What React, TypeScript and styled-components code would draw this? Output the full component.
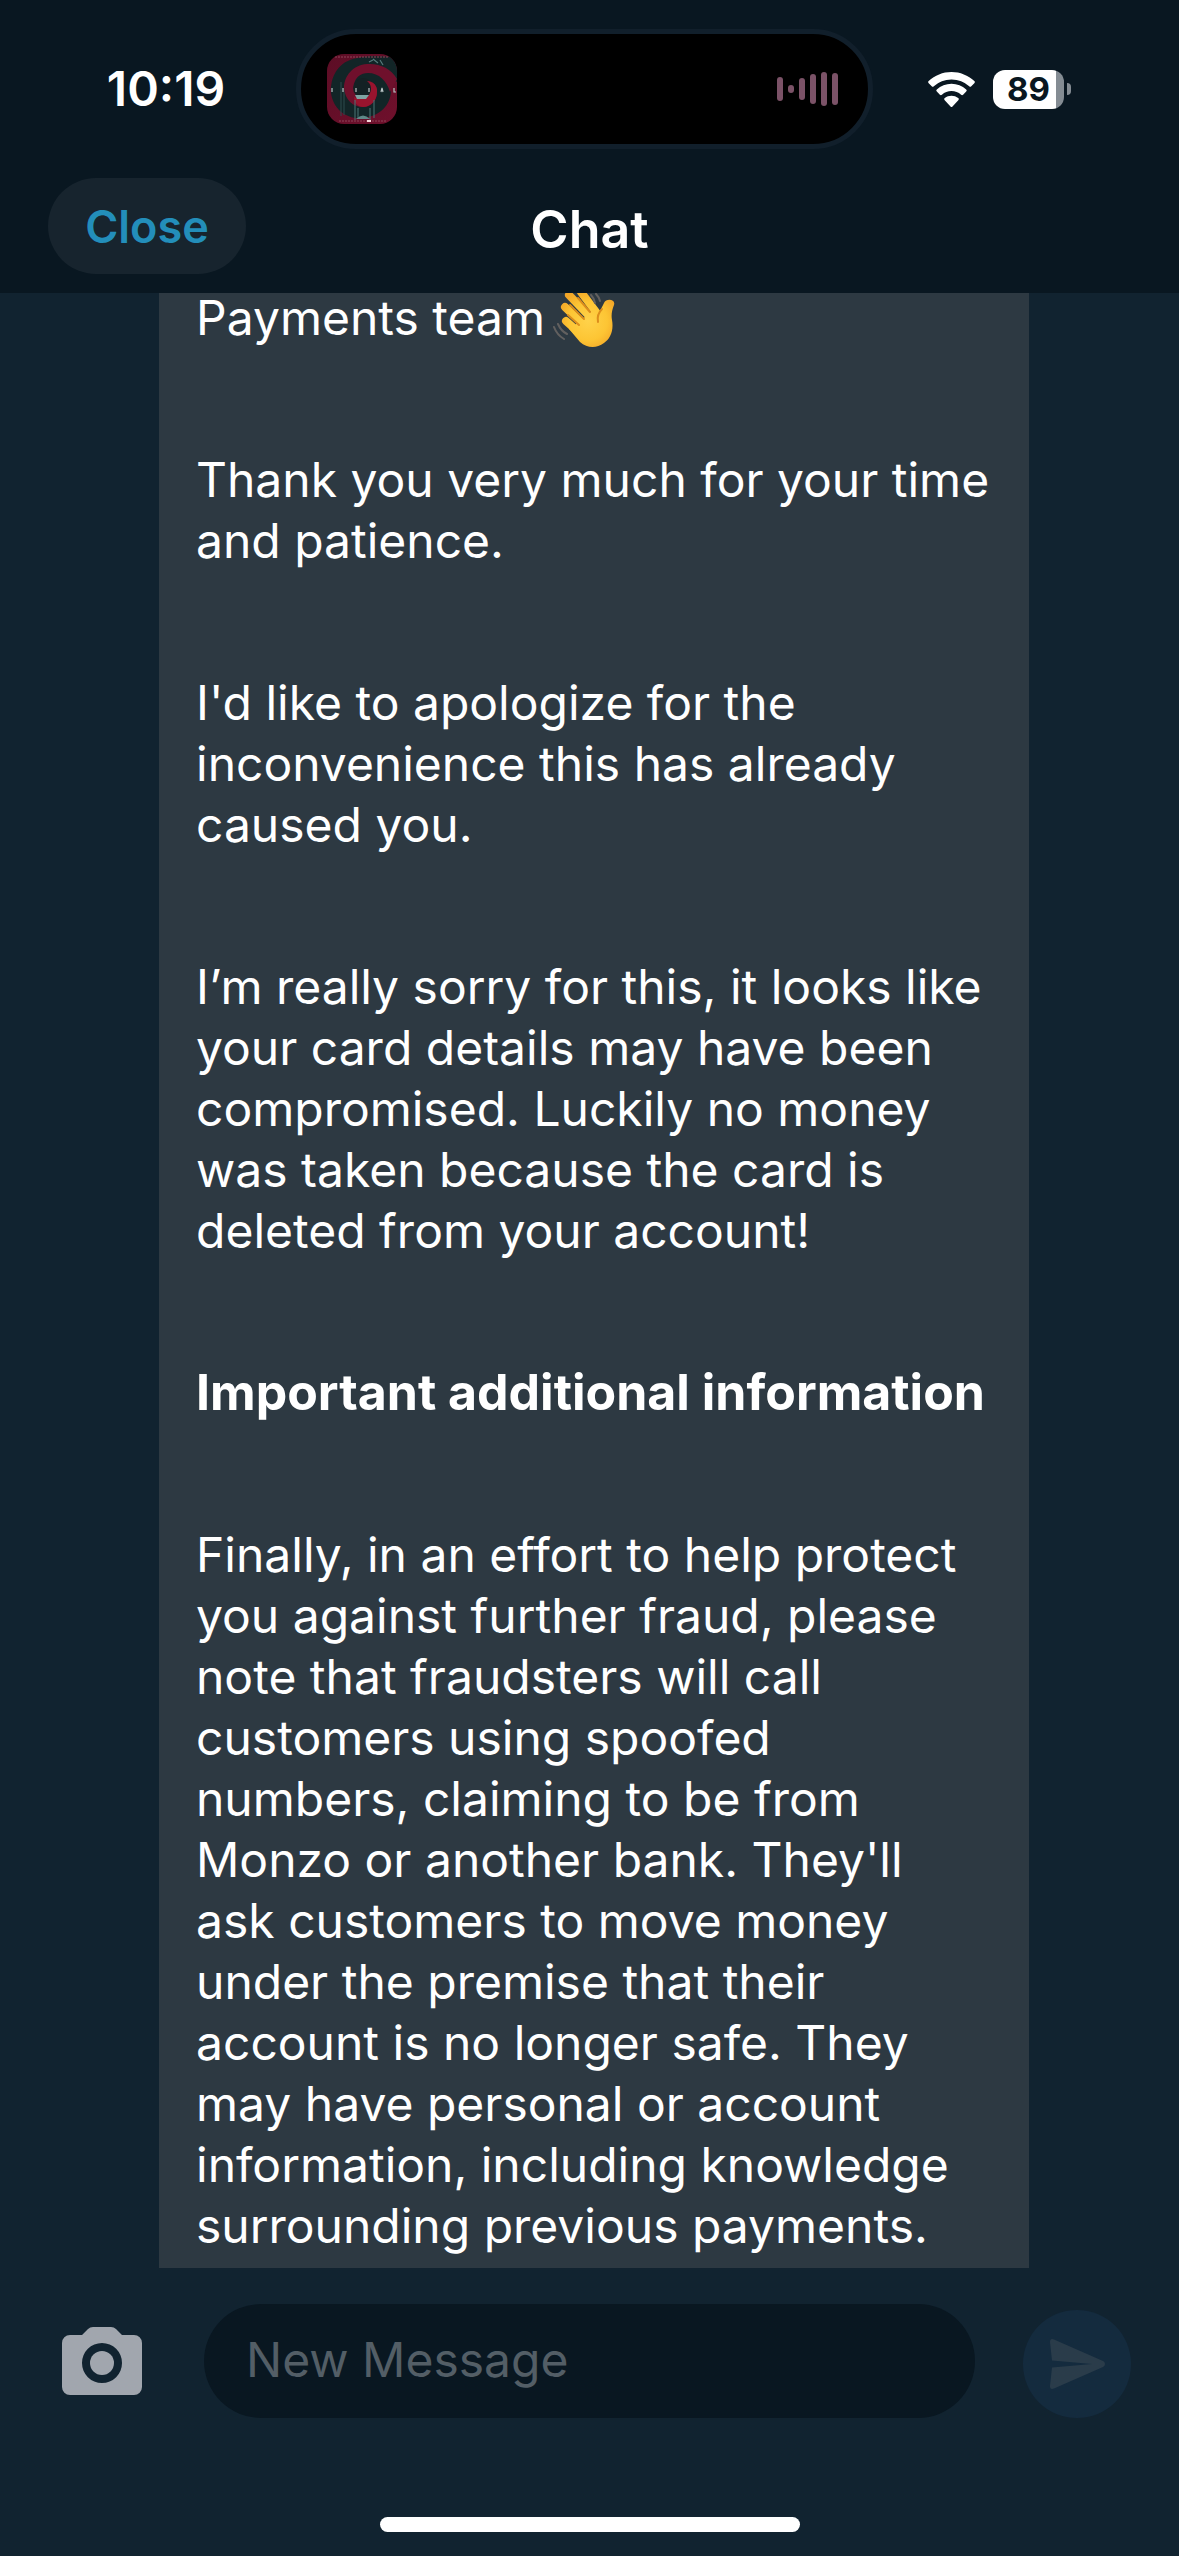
import React from "react";
import styled, { createGlobalStyle } from "styled-components";

const color = {
  header: "#091721",
  page: "#112330",
  bubble: "#2d3942",
  pill: "#17242e",
  islandRim: "#111f2b",
  accent: "#238eba",
  wave: "#7b5267",
  muted: "#535e66",
  icon: "#a1a6ae",
  send: "#142b3e",
  sendIcon: "#2a3c4a",
};

const GlobalStyle = createGlobalStyle`
  *, *::before, *::after { box-sizing: border-box; }
  body {
    margin: 0;
    background: ${color.page};
    color: #fff;
    font-family: Inter, "Liberation Sans", sans-serif;
  }
  button, input { font: inherit; border: 0; padding: 0; margin: 0; }
`;

const Screen = styled.div`
  display: flex;
  flex-direction: column;
  height: 100vh;
  overflow: hidden;
`;

const Header = styled.header`
  flex: none;
  background: ${color.header};
  padding-bottom: 11px;
`;

const StatusBar = styled.div`
  display: flex;
  align-items: center;
  padding-top: 29px;
`;

const Clock = styled.time`
  width: 296px;
  padding-left: 36px;
  text-align: center;
  font-size: 48px;
  font-weight: 600;
  line-height: 60px;
`;

const Island = styled.div`
  flex: 1;
  height: 120px;
  display: flex;
  align-items: center;
  justify-content: space-between;
  padding: 0 30px 0 26px;
  border: 5px solid ${color.islandRim};
  border-radius: 60px;
  background: #000;
`;

const Indicators = styled.div`
  width: 306px;
  display: flex;
  align-items: center;
  gap: 18px;
  padding-left: 55px;
`;

const BatteryWrap = styled.div`
  display: flex;
  align-items: center;
  gap: 3px;
`;

const BatteryBody = styled.div`
  width: 71px;
  height: 39px;
  border-radius: 12px;
  background: linear-gradient(to right, #fff 63px, #848c93 63px);
  color: ${color.header};
  text-align: center;
  font-size: 33px;
  font-weight: 700;
  line-height: 39px;
`;

const BatteryCap = styled.div`
  width: 4px;
  height: 12px;
  border-radius: 0 4px 4px 0;
  background: #848c93;
`;

const NavBar = styled.div`
  display: grid;
  grid-template-columns: 1fr auto 1fr;
  align-items: start;
  padding: 29px 48px 0;
`;

const CloseButton = styled.button`
  justify-self: start;
  width: 198px;
  height: 96px;
  border-radius: 48px;
  background: ${color.pill};
  color: ${color.accent};
  font-size: 45px;
  font-weight: 600;
`;

const Title = styled.h1`
  margin: 0;
  font-size: 52px;
  font-weight: 600;
  line-height: 104px;
`;

const Thread = styled.main`
  flex: 1;
  min-height: 0;
  display: flex;
  flex-direction: column;
  justify-content: flex-end;
  overflow: hidden;
  padding: 0 150px 0 159px;
`;

const Bubble = styled.article`
  display: flex;
  flex-direction: column;
  gap: 101px;
  padding: 0 37px 12px;
  background: ${color.bubble};
`;

const Paragraph = styled.p<{ $bold?: boolean }>`
  margin: 0;
  font-size: ${(p) => (p.$bold ? 50 : 48)}px;
  font-weight: ${(p) => (p.$bold ? 700 : 400)};
  line-height: 61px;
`;

const Wave = styled.svg`
  width: 66px;
  height: 61px;
  margin-left: 7px;
  vertical-align: top;
`;

const Composer = styled.form`
  flex: none;
  display: flex;
  align-items: center;
  padding: 36px 48px 0 62px;
`;

const CameraButton = styled.button`
  display: flex;
  width: 80px;
  height: 68px;
  background: none;
`;

const MessageInput = styled.input`
  flex: 1;
  min-width: 0;
  height: 114px;
  margin: 0 48px 0 62px;
  padding: 0 42px 4px;
  border-radius: 57px;
  outline: none;
  background: ${color.header};
  color: #fff;
  font-size: 48px;
  &::placeholder { color: ${color.muted}; opacity: 1; }
`;

const SendButton = styled.button`
  display: grid;
  place-items: center;
  align-self: flex-end;
  width: 108px;
  height: 108px;
  border-radius: 50%;
  background: ${color.send};
`;

const HomeArea = styled.div`
  flex: none;
  display: flex;
  justify-content: center;
  padding: 99px 0 24px;
`;

const HomeIndicator = styled.div`
  width: 420px;
  height: 15px;
  border-radius: 8px;
  background: #fff;
`;

const AlbumArt = () => (
  <svg width="70" height="70" viewBox="0 0 70 70" aria-hidden="true">
    <defs>
      <clipPath id="artClip">
        <rect width="70" height="70" rx="17" />
      </clipPath>
      <linearGradient id="artRed" x1="0" y1="0" x2="1" y2="1">
        <stop offset="0" stopColor="#5c0d25" />
        <stop offset="1" stopColor="#6f102c" />
      </linearGradient>
    </defs>
    <g clipPath="url(#artClip)">
      <rect width="70" height="70" fill="url(#artRed)" />
      <path
        d="M30 4C12 7 3 22 4 39c2 16 16 27 32 25 17-2 28-13 28-28 0-6-1-9-2-12l8 4V4C58 2 44 1 30 4Z"
        fill="#122527"
      />
      <path
        d="M14 28v34M17 34v27"
        stroke="#2c4d4e"
        strokeWidth="1"
      />
      <path
        d="M70 25C64 14 52 9 40 10 26 11 17 22 17 34c1 12 9 19 19 19 9 0 14-7 14-15 0-6-4-11-9-11 3 3 5 6 4 10-1 5-5 7-9 6-6-1-10-5-9-12 1-8 7-12 14-12 11 0 19 8 22 19Z"
        fill="#6f102c"
      />
      <circle cx="36" cy="34" r="10" fill="#142124" />
      <path d="M27 43c6 3 14 2 16-4 2-4 1-9-3-12 6 0 11 5 10 11 0 8-6 15-14 15-5 0-9-4-9-10Z" fill="#98142e" />
      <path d="M28 41h14l-3 4h-9Z" fill="#7fa3a2" />
      <path d="M28 46v20M31 54v11M43 54v12M47 46v18" stroke="#4b7776" strokeWidth="1" />
      <path d="M29 65q7-7 14 0Z" fill="#5f8988" />
      <path d="M46 5l5 4M53 6l3 5M42 8l4-2" stroke="#55797a" strokeWidth="1.2" />
      <path d="M8 3h54M12 67h48" stroke="#8d4559" strokeWidth="1" strokeDasharray="2 1" />
      <path d="M40 67h4" stroke="#f3d5d8" strokeWidth="2" />
      <path
        d="M5 34v4M16 34v4M29 34v4M42 34v4M54 38l1-4 1 4M67 34v4h2"
        stroke="#b9c4c5"
        strokeWidth="1.2"
        fill="none"
      />
    </g>
  </svg>
);

const levels = [24, 8, 22, 30, 34, 32];

const AudioLevels = () => (
  <svg width="61" height="34" viewBox="0 0 61 34" aria-hidden="true">
    {levels.map((h, i) => (
      <rect key={i} x={i * 11} y={(34 - h) / 2} width="6" height={h} rx="3" fill={color.wave} />
    ))}
  </svg>
);

const WifiIcon = () => (
  <svg width="47" height="35" viewBox="0 0 47 35" fill="#fff" role="img" aria-label="Wi-Fi">
    <path d="M23.500 0C14.800 0 6.800 3.400.700 9a1.500 1.500 0 0 0 0 2.200l3 3.100a1.500 1.500 0 0 0 2.100 0A26 26 0 0 1 23.500 7.500 26 26 0 0 1 41.200 14.300a1.500 1.500 0 0 0 2.100 0l3-3.100a1.500 1.500 0 0 0 0-2.200C40.200 3.400 32.200 0 23.500 0Z" />
    <path d="M23.500 11.800c-5.600 0-10.700 2.100-14.700 5.600a1.500 1.500 0 0 0 0 2.200l3.100 3.100a1.500 1.500 0 0 0 2 0 14.500 14.500 0 0 1 19.200 0 1.500 1.500 0 0 0 2 0l3.100-3.100a1.500 1.500 0 0 0 0-2.200c-4-3.500-9.100-5.600-14.700-5.600Z" />
    <path d="M23.500 23.800c-2.500 0-4.800.8-6.700 2.200a1.500 1.500 0 0 0-.1 2.200l5.800 6.200a1.400 1.400 0 0 0 2 0l5.800-6.200a1.500 1.500 0 0 0-.1-2.200 11.200 11.200 0 0 0-6.700-2.200Z" />
  </svg>
);

const WavingHand = () => (
  <Wave viewBox="0 0 66 61" role="img" aria-label="waving hand">
    <defs>
      <radialGradient id="skin" gradientUnits="userSpaceOnUse" cx="36" cy="34" r="32">
        <stop offset="0" stopColor="#ffd24a" />
        <stop offset="0.6" stopColor="#fdc534" />
        <stop offset="1" stopColor="#f3a627" />
      </radialGradient>
    </defs>
    <g stroke="url(#skin)" strokeWidth="8" strokeLinecap="round" fill="none">
      <path d="M14 34 32 50" />
      <path d="M13 20 36 42" />
      <path d="M17 8 40 32" />
      <path d="M29 5 44 25" />
    </g>
    <path
      d="M23 38 44 21c1 2 4 4 5 1l3-6c2-5 12-4 10 2-2 5-3 10-2 15 2 11-2 19-8 23-8 6-17 5-24-1L17 42Z"
      fill="url(#skin)"
    />
    <path
      d="M16 28 27 38M18 18 32 32M26 11 38 25M50 22c-4 4-5 8-4 13"
      stroke="#dc8d1c"
      strokeWidth="2"
      strokeLinecap="round"
      fill="none"
    />
    <path
      d="M2 40q3 8 10 12M6 37q3 7 9 10M39 8q3 3 4 8M44 7q3 3 4 7"
      stroke="#62605f"
      strokeWidth="2"
      strokeLinecap="round"
      fill="none"
    />
  </Wave>
);

const CameraIcon = () => (
  <svg width="80" height="68" viewBox="0 0 80 68" aria-hidden="true">
    <path
      fillRule="evenodd"
      fill={color.icon}
      d="M20 8l6-6q2-2 5-2h18q3 0 5 2l6 6h12a8 8 0 0 1 8 8v44a8 8 0 0 1-8 8H8a8 8 0 0 1-8-8V16a8 8 0 0 1 8-8ZM40 16a20 20 0 1 0 0 40 20 20 0 0 0 0-40Z"
    />
    <circle cx="40" cy="36" r="12" fill={color.icon} />
  </svg>
);

const SendIcon = () => (
  <svg width="55" height="50" viewBox="0 0 55 50" fill={color.sendIcon} aria-hidden="true">
    <path d="M0 3Q0-1 4 .5L53 22q2 1 2 3t-2 3L4 49.500Q0 51 0 47L2 28.500 42 25 2 21.500Z" />
  </svg>
);

const messages: { text: string; bold?: boolean; wave?: boolean }[] = [
  { text: "Payments team", wave: true },
  { text: "Thank you very much for your time and patience." },
  { text: "I'd like to apologize for the inconvenience this has already caused you." },
  {
    text: "I’m really sorry for this, it looks like your card details may have been compromised. Luckily no money was taken because the card is deleted from your account!",
  },
  { text: "Important additional information", bold: true },
  {
    text: "Finally, in an effort to help protect you against further fraud, please note that fraudsters will call customers using spoofed numbers, claiming to be from Monzo or another bank. They'll ask customers to move money under the premise that their account is no longer safe. They may have personal or account information, including knowledge surrounding previous payments.",
  },
];

export default function App() {
  return (
    <Screen>
      <GlobalStyle />
      <Header>
        <StatusBar>
          <Clock>10:19</Clock>
          <Island>
            <AlbumArt />
            <AudioLevels />
          </Island>
          <Indicators>
            <WifiIcon />
            <BatteryWrap>
              <BatteryBody>89</BatteryBody>
              <BatteryCap />
            </BatteryWrap>
          </Indicators>
        </StatusBar>
        <NavBar>
          <CloseButton type="button">Close</CloseButton>
          <Title>Chat</Title>
        </NavBar>
      </Header>
      <Thread>
        <Bubble>
          {messages.map((m) => (
            <Paragraph key={m.text} $bold={m.bold}>
              {m.text}
              {m.wave && <WavingHand />}
            </Paragraph>
          ))}
        </Bubble>
      </Thread>
      <Composer onSubmit={(e) => e.preventDefault()}>
        <CameraButton type="button" aria-label="Attach a photo">
          <CameraIcon />
        </CameraButton>
        <MessageInput type="text" placeholder="New Message" aria-label="New Message" />
        <SendButton type="submit" aria-label="Send">
          <SendIcon />
        </SendButton>
      </Composer>
      <HomeArea>
        <HomeIndicator />
      </HomeArea>
    </Screen>
  );
}
